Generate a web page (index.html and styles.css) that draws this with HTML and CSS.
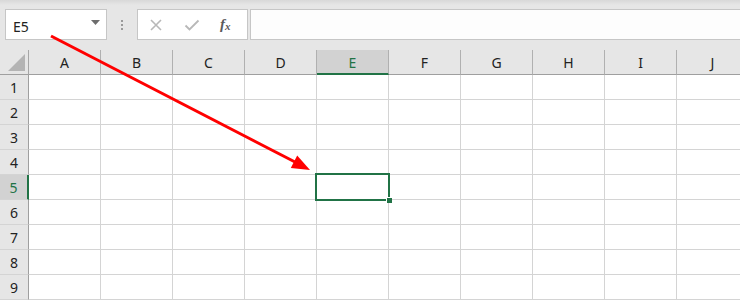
FILE: index.html
```html
<!DOCTYPE html>
<html>
<head>
<meta charset="utf-8">
<link rel="stylesheet" href="styles.css">
</head>
<body>
<div class="app">
  <div class="topbar">
    <div class="namebox">
      <span class="ref">E5</span>
      <svg class="dd" width="9" height="5" viewBox="0 0 9 5"><path d="M0 0h9L4.5 5z" fill="#6d6d6d"/></svg>
    </div>
    <div class="sep"><i></i><i></i><i></i></div>
    <div class="fbtns">
      <svg class="ico" width="14" height="14" viewBox="0 0 14 14"><path d="M2 2L12 12M12 2L2 12" stroke="#b8b8b8" stroke-width="1.6" fill="none"/></svg>
      <svg class="ico" width="16" height="14" viewBox="0 0 16 14"><path d="M1.5 7.5L5.5 11.5L14.5 2.5" stroke="#b8b8b8" stroke-width="1.8" fill="none"/></svg>
      <span class="fx">f<sub>x</sub></span>
    </div>
    <div class="formula"></div>
  </div>
  <div class="sheet">
    <div class="corner"><svg width="17" height="17" viewBox="0 0 17 17"><path d="M17 0V17H0z" fill="#b4b4b4"/></svg></div>
    <div class="ch">A</div><div class="ch">B</div><div class="ch">C</div><div class="ch">D</div><div class="ch sel">E</div><div class="ch">F</div><div class="ch">G</div><div class="ch">H</div><div class="ch">I</div><div class="ch">J</div>

    <div class="rh">1</div><div class="c"></div><div class="c"></div><div class="c"></div><div class="c"></div><div class="c"></div><div class="c"></div><div class="c"></div><div class="c"></div><div class="c"></div><div class="c"></div>
    <div class="rh">2</div><div class="c"></div><div class="c"></div><div class="c"></div><div class="c"></div><div class="c"></div><div class="c"></div><div class="c"></div><div class="c"></div><div class="c"></div><div class="c"></div>
    <div class="rh">3</div><div class="c"></div><div class="c"></div><div class="c"></div><div class="c"></div><div class="c"></div><div class="c"></div><div class="c"></div><div class="c"></div><div class="c"></div><div class="c"></div>
    <div class="rh">4</div><div class="c"></div><div class="c"></div><div class="c"></div><div class="c"></div><div class="c"></div><div class="c"></div><div class="c"></div><div class="c"></div><div class="c"></div><div class="c"></div>
    <div class="rh sel">5</div><div class="c"></div><div class="c"></div><div class="c"></div><div class="c"></div><div class="c active"><span class="selbox"><span class="handle"></span></span></div><div class="c"></div><div class="c"></div><div class="c"></div><div class="c"></div><div class="c"></div>
    <div class="rh">6</div><div class="c"></div><div class="c"></div><div class="c"></div><div class="c"></div><div class="c"></div><div class="c"></div><div class="c"></div><div class="c"></div><div class="c"></div><div class="c"></div>
    <div class="rh">7</div><div class="c"></div><div class="c"></div><div class="c"></div><div class="c"></div><div class="c"></div><div class="c"></div><div class="c"></div><div class="c"></div><div class="c"></div><div class="c"></div>
    <div class="rh">8</div><div class="c"></div><div class="c"></div><div class="c"></div><div class="c"></div><div class="c"></div><div class="c"></div><div class="c"></div><div class="c"></div><div class="c"></div><div class="c"></div>
    <div class="rh">9</div><div class="c"></div><div class="c"></div><div class="c"></div><div class="c"></div><div class="c"></div><div class="c"></div><div class="c"></div><div class="c"></div><div class="c"></div><div class="c"></div>
  </div>
  <svg class="arrow" width="740" height="300" viewBox="0 0 740 300">
    <line x1="51" y1="36" x2="295" y2="162" stroke="#ff0000" stroke-width="3"/>
    <polygon points="310,170 290.8,167.9 297.2,155.5" fill="#ff0000"/>
  </svg>
</div>
</body>
</html>
```

FILE: styles.css
```css
html, body {
  margin: 0;
  padding: 0;
  background: #e6e6e6;
  font-family: "Noto Sans", "Liberation Sans", sans-serif;
}
.app {
  position: relative;
  width: 740px;
  height: 300px;
  overflow: hidden;
}
.topbar {
  height: 50px;
  box-sizing: border-box;
  padding: 9px 0 0 5px;
  display: flex;
  align-items: flex-start;
  background: linear-gradient(#d8d8d8, #e6e6e6 5px);
}
.namebox {
  width: 87px;
  height: 29px;
  border: 1px solid #c6c6c6;
  background: #ffffff;
  display: flex;
  align-items: center;
  justify-content: space-between;
  padding: 0 6px 0 7px;
}
.ref {
  font-size: 14px;
  color: #222;
  padding-top: 3px;
}
.dd { margin-top: -4px; }
.sep {
  width: 30px;
  height: 31px;
  display: flex;
  flex-direction: column;
  align-items: center;
  justify-content: center;
  gap: 2px;
}
.sep i {
  display: block;
  width: 2px;
  height: 2px;
  background: #9a9a9a;
}
.fbtns {
  width: 98px;
  height: 29px;
  border: 1px solid #c6c6c6;
  background: #ffffff;
  display: flex;
  align-items: center;
  padding-left: 11px;
  gap: 21px;
}
.ico { display: block; }
.fx {
  font-family: "Liberation Serif", serif;
  font-style: italic;
  font-weight: bold;
  font-size: 15px;
  color: #5a5a5a;
  margin-left: -1px;
}
.fx sub {
  font-size: 11px;
  vertical-align: 0;
  position: relative;
  top: 1px;
}
.formula {
  flex: 1;
  margin-left: 2px;
  height: 29px;
  border: 1px solid #c6c6c6;
  border-right: none;
  background: #fdfdfd;
}
.sheet {
  display: grid;
  grid-template-columns: 29px repeat(10, 72px);
  grid-auto-rows: 25px;
  background: #ffffff;
}
.corner {
  background: #e6e6e6;
  border-right: 1px solid #a6a6a6;
  border-bottom: 1px solid #9f9f9f;
  display: flex;
  align-items: flex-end;
  justify-content: flex-end;
  padding: 0 3px 3px 0;
}
.corner svg { display: block; }
.ch {
  background: #e6e6e6;
  border-right: 1px solid #b0b0b0;
  border-bottom: 1px solid #9f9f9f;
  display: flex;
  align-items: center;
  justify-content: center;
  font-size: 14px;
  color: #222;
  padding-top: 1px;
}
.ch.sel {
  background: #d2d2d2;
  color: #217346;
  border-bottom: 2px solid #217346;
  padding-top: 2px;
}
.rh {
  background: #e6e6e6;
  border-right: 1px solid #9f9f9f;
  border-bottom: 1px solid #d4d4d4;
  display: flex;
  align-items: center;
  justify-content: center;
  font-size: 14px;
  color: #222;
}
.rh.sel {
  background: #d2d2d2;
  color: #217346;
  border-right: 2px solid #217346;
}
.c {
  border-right: 1px solid #d4d4d4;
  border-bottom: 1px solid #d4d4d4;
}
.c.active {
  position: relative;
}
.selbox {
  position: absolute;
  left: -2px;
  top: -2px;
  width: 71px;
  height: 24px;
  border: 2px solid #217346;
  z-index: 2;
}
.handle {
  position: absolute;
  right: -4px;
  bottom: -4px;
  width: 5px;
  height: 5px;
  background: #217346;
  border: 1px solid #ffffff;
  border-width: 1px 0 0 1px;
}
.arrow {
  position: absolute;
  left: 0;
  top: 0;
  pointer-events: none;
  z-index: 5;
}
```
